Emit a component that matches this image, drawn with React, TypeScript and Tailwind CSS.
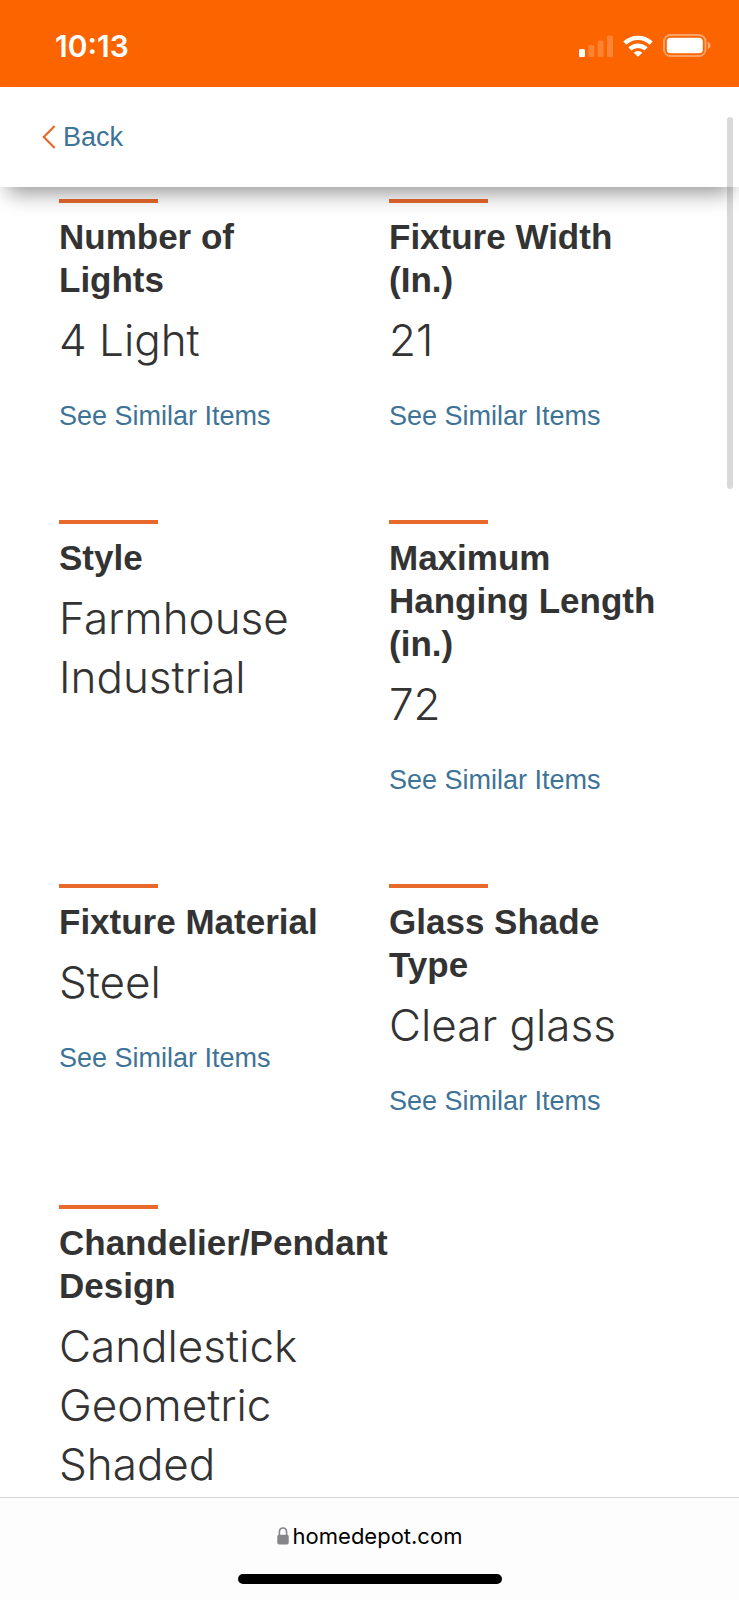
import React from 'react';

type Spec = {
  title: string;
  values: string[];
  similar?: boolean;
  wide?: boolean;
};

const specs: Spec[] = [
  { title: 'Number of Lights', values: ['4 Light'], similar: true },
  { title: 'Fixture Width (In.)', values: ['21'], similar: true },
  { title: 'Style', values: ['Farmhouse', 'Industrial'] },
  { title: 'Maximum Hanging Length (in.)', values: ['72'], similar: true },
  { title: 'Fixture Material', values: ['Steel'], similar: true },
  { title: 'Glass Shade Type', values: ['Clear glass'], similar: true },
  { title: 'Chandelier/Pendant Design', values: ['Candlestick', 'Geometric', 'Shaded'], wide: true },
];

function StatusIcons() {
  return (
    <div className="flex items-center gap-[10px]">
      <svg width="34" height="22" viewBox="0 0 34 22" fill="#fff">
        <rect x="0" y="14" width="6" height="8" rx="1.5" />
        <rect x="9.3" y="10" width="6" height="12" rx="1.5" opacity="0.2" />
        <rect x="18.6" y="5.5" width="6" height="16.5" rx="1.5" opacity="0.2" />
        <rect x="28" y="0.5" width="6" height="21.5" rx="1.5" opacity="0.2" />
      </svg>
      <svg width="30" height="22" viewBox="0 0 30 22" fill="none" stroke="#fff" strokeWidth="4.4">
        <path d="M1.8 8.2A19 19 0 0 1 28.2 8.2" />
        <path d="M6.9 13.9A11.8 11.8 0 0 1 23.1 13.9" />
        <path d="M15 21.8L10.6 17.8A6.6 6.6 0 0 1 19.4 17.8Z" fill="#fff" stroke="none" />
      </svg>
      <svg width="48" height="23" viewBox="0 0 48 23">
        <rect x="1" y="1" width="41.5" height="21" rx="6.5" fill="none" stroke="#fff" strokeOpacity="0.4" strokeWidth="2" />
        <rect x="3.8" y="3.8" width="36" height="15.4" rx="3.8" fill="#fff" />
        <path d="M44.8 7.8C46.4 8.4 47.5 9.8 47.5 11.5S46.4 14.6 44.8 15.2Z" fill="#fff" fillOpacity="0.45" />
      </svg>
    </div>
  );
}

function SpecItem({ title, values, similar, wide }: Spec) {
  return (
    <section className={wide ? 'col-span-2 max-w-[400px]' : 'pr-[50px] pb-[84px]'}>
      <div className="h-1 w-[99px] bg-[#e8692c]" />
      <h3 className="mt-3 text-[35px] leading-[43px] font-bold">{title}</h3>
      <div className="mt-[10px] font-['Inter',sans-serif] text-[44px] leading-[59px] font-light">
        {values.map((value) => (
          <p key={value}>{value}</p>
        ))}
      </div>
      {similar && (
        <a href="#similar" className="mt-[26px] block text-[27px] leading-10 text-[#3e7398]">
          See Similar Items
        </a>
      )}
    </section>
  );
}

export default function App() {
  return (
    <div className="relative flex h-screen flex-col overflow-hidden bg-white font-['Liberation_Sans',Arial,sans-serif] text-[#333]">
      <div className="flex h-[87px] shrink-0 items-center justify-between bg-[#fc6400] pt-1 pr-[28px] pl-[55px]">
        <span className="font-['Inter',sans-serif] text-[30px] leading-9 font-semibold text-white">10:13</span>
        <StatusIcons />
      </div>

      <header className="relative z-10 flex h-[100px] shrink-0 items-center bg-white px-[42px] shadow-[0_14px_20px_-8px_rgba(0,0,0,0.42)]">
        <button type="button" className="flex items-center gap-[7px] text-[27px] leading-10 text-[#3e7398]">
          <svg width="14" height="24" viewBox="0 0 14 24" fill="none" stroke="#e8692c" strokeWidth="2.2">
            <path d="M12.6 1L1.8 12L12.6 23" />
          </svg>
          Back
        </button>
      </header>

      <main className="min-h-0 flex-1 overflow-hidden pt-3 pr-5 pl-[59px]">
        <div className="grid grid-cols-2">
          {specs.map((spec) => (
            <SpecItem key={spec.title} {...spec} />
          ))}
        </div>
      </main>

      <footer className="flex h-[103px] shrink-0 flex-col items-center justify-between border-t border-[#d5d5d5] bg-[#fdfdfd] pt-[22px] pb-4">
        <div className="flex items-center gap-1 font-['Inter',sans-serif] text-[22px] leading-8 text-black">
          <svg width="12" height="18" viewBox="0 0 12 18">
            <path d="M2.4 9V5.2C2.4 2.6 3.9 1 6 1S9.6 2.6 9.6 5.2V9" fill="none" stroke="#85858a" strokeWidth="1.6" />
            <rect x="0.3" y="7.8" width="11.4" height="9.6" rx="1.6" fill="#85858a" />
          </svg>
          homedepot.com
        </div>
        <div className="h-[10px] w-[264px] rounded-full bg-black" />
      </footer>

      {/* overlay scroll indicator */}
      <div className="absolute top-[117px] right-[6px] z-20 h-[372px] w-[6px] rounded-full bg-black/15" />
    </div>
  );
}
